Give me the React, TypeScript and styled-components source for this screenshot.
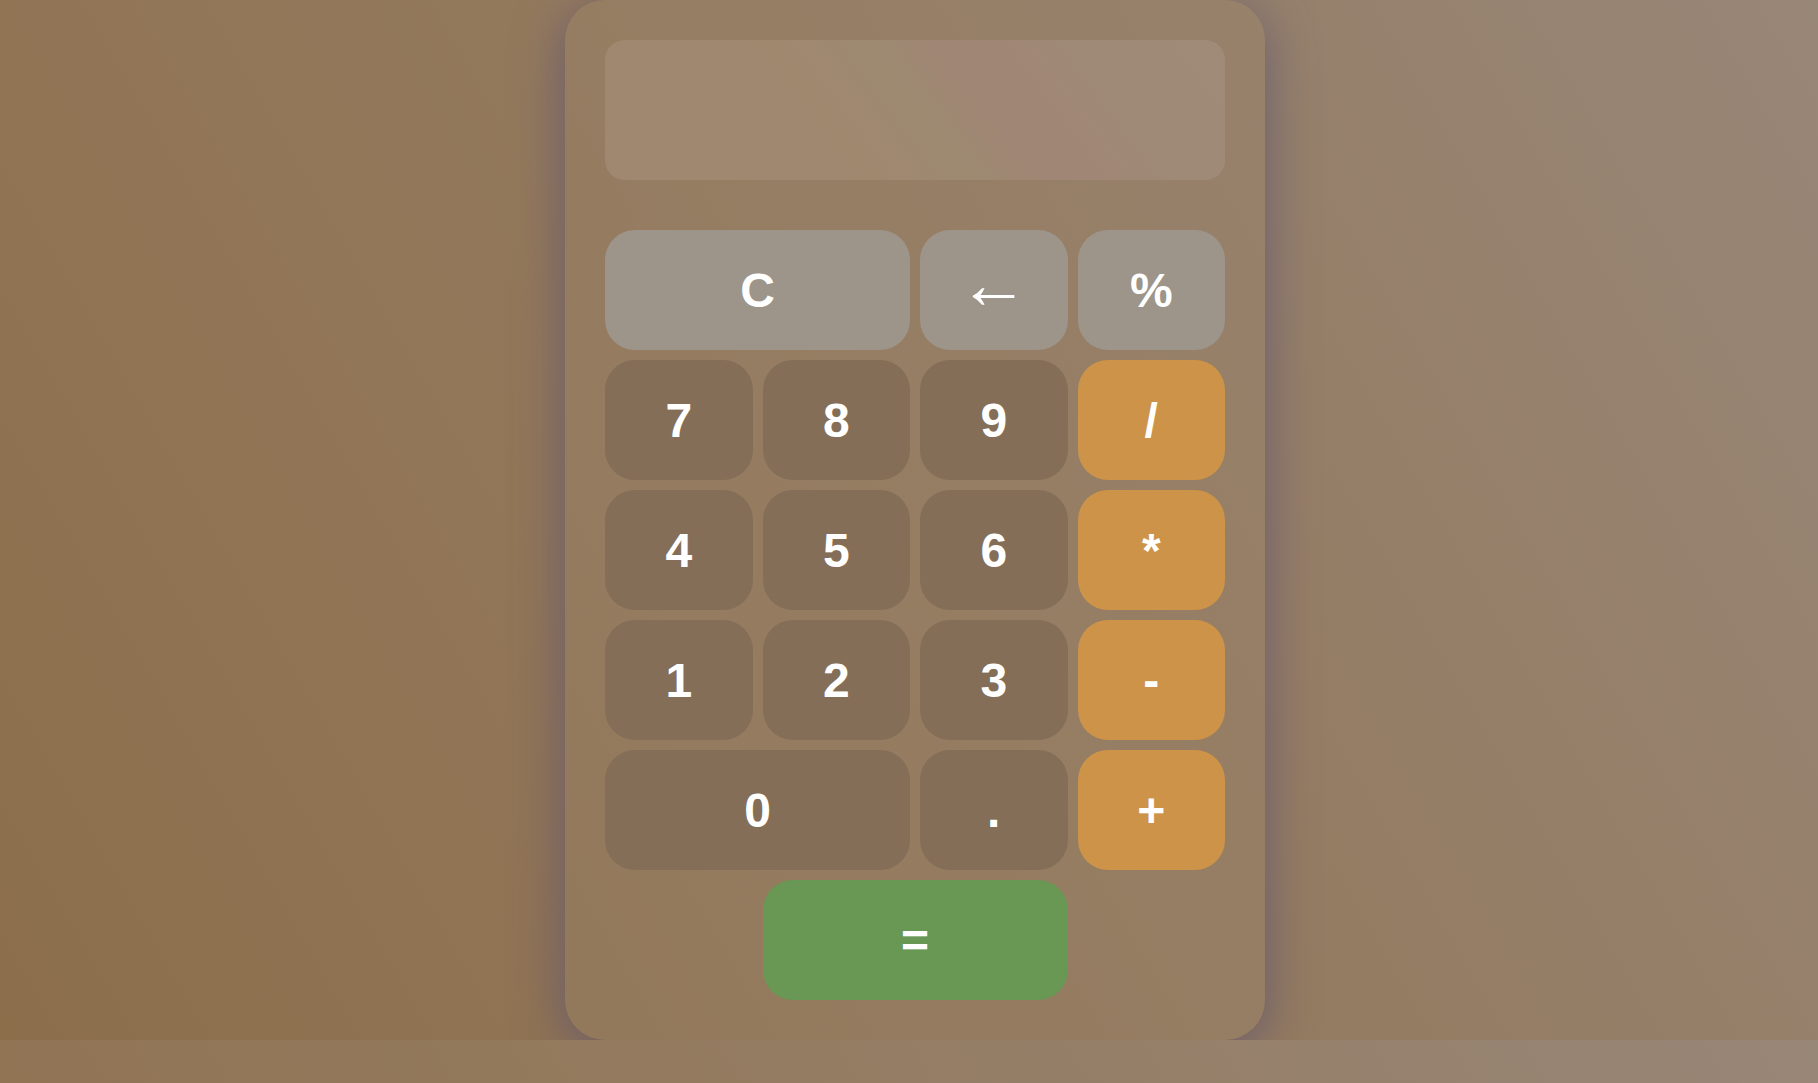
import React from "react";
import styled, { createGlobalStyle, css } from "styled-components";

const GlobalStyle = createGlobalStyle`
  html, body {
    margin: 0;
    padding: 0;
  }
  body {
    background: linear-gradient(60deg, #8c6e4b 0%, #93795c 45%, #988677 100%);
    font-family: "Liberation Sans", Arial, sans-serif;
  }
`;

const Page = styled.div`
  display: flex;
  justify-content: center;
  padding-left: 12px;
`;

const Calculator = styled.div`
  width: 700px;
  box-sizing: border-box;
  padding: 40px;
  border-radius: 40px;
  background: rgba(155, 132, 108, 0.3);
  box-shadow: 0 10px 50px rgba(95, 82, 112, 0.8);
  display: flex;
  flex-direction: column;
  gap: 50px;
`;

const Display = styled.div`
  height: 140px;
  border-radius: 20px;
  background: linear-gradient(
    53deg,
    #a0876f 0%,
    #a0886f 38%,
    #9d8a71 50%,
    #a08674 60%,
    #a08775 68%,
    #9e8a76 80%,
    #9f8b78 100%
  );
`;

const Keys = styled.div`
  display: grid;
  grid-template-columns: repeat(4, 1fr);
  grid-auto-rows: 120px;
  gap: 10px;
`;

type Variant = "func" | "num" | "op" | "eq";

const variantColors: Record<Variant, string> = {
  func: "#9d948a",
  num: "#846e57",
  op: "#cc9349",
  eq: "#689853",
};

const Key = styled.button<{ $variant: Variant; $span?: number; $start?: number }>`
  border: none;
  border-radius: 30px;
  background: ${(p) => variantColors[p.$variant]};
  color: #ffffff;
  font-family: "Liberation Sans", Arial, sans-serif;
  font-weight: 700;
  font-size: 48px;
  display: flex;
  align-items: center;
  justify-content: center;
  padding: 0;
  cursor: pointer;
  ${(p) =>
    p.$span &&
    css`
      grid-column: ${p.$start ? `${p.$start} / ` : ""}span ${p.$span};
    `}
`;

const Arrow = styled.span`
  font-family: "Liberation Sans", Arial, sans-serif;
  font-weight: 400;
  font-size: 70px;
  line-height: 1;
  display: inline-block;
  transform: translateY(-6px);
`;

export default function App() {
  return (
    <>
      <GlobalStyle />
      <Page>
        <Calculator>
          <Display />
          <Keys>
            <Key $variant="func" $span={2}>C</Key>
            <Key $variant="func"><Arrow>←</Arrow></Key>
            <Key $variant="func">%</Key>
            <Key $variant="num">7</Key>
            <Key $variant="num">8</Key>
            <Key $variant="num">9</Key>
            <Key $variant="op">/</Key>
            <Key $variant="num">4</Key>
            <Key $variant="num">5</Key>
            <Key $variant="num">6</Key>
            <Key $variant="op">*</Key>
            <Key $variant="num">1</Key>
            <Key $variant="num">2</Key>
            <Key $variant="num">3</Key>
            <Key $variant="op">-</Key>
            <Key $variant="num" $span={2}>0</Key>
            <Key $variant="num">.</Key>
            <Key $variant="op">+</Key>
            <Key $variant="eq" $span={2} $start={2}>=</Key>
          </Keys>
        </Calculator>
      </Page>
    </>
  );
}
